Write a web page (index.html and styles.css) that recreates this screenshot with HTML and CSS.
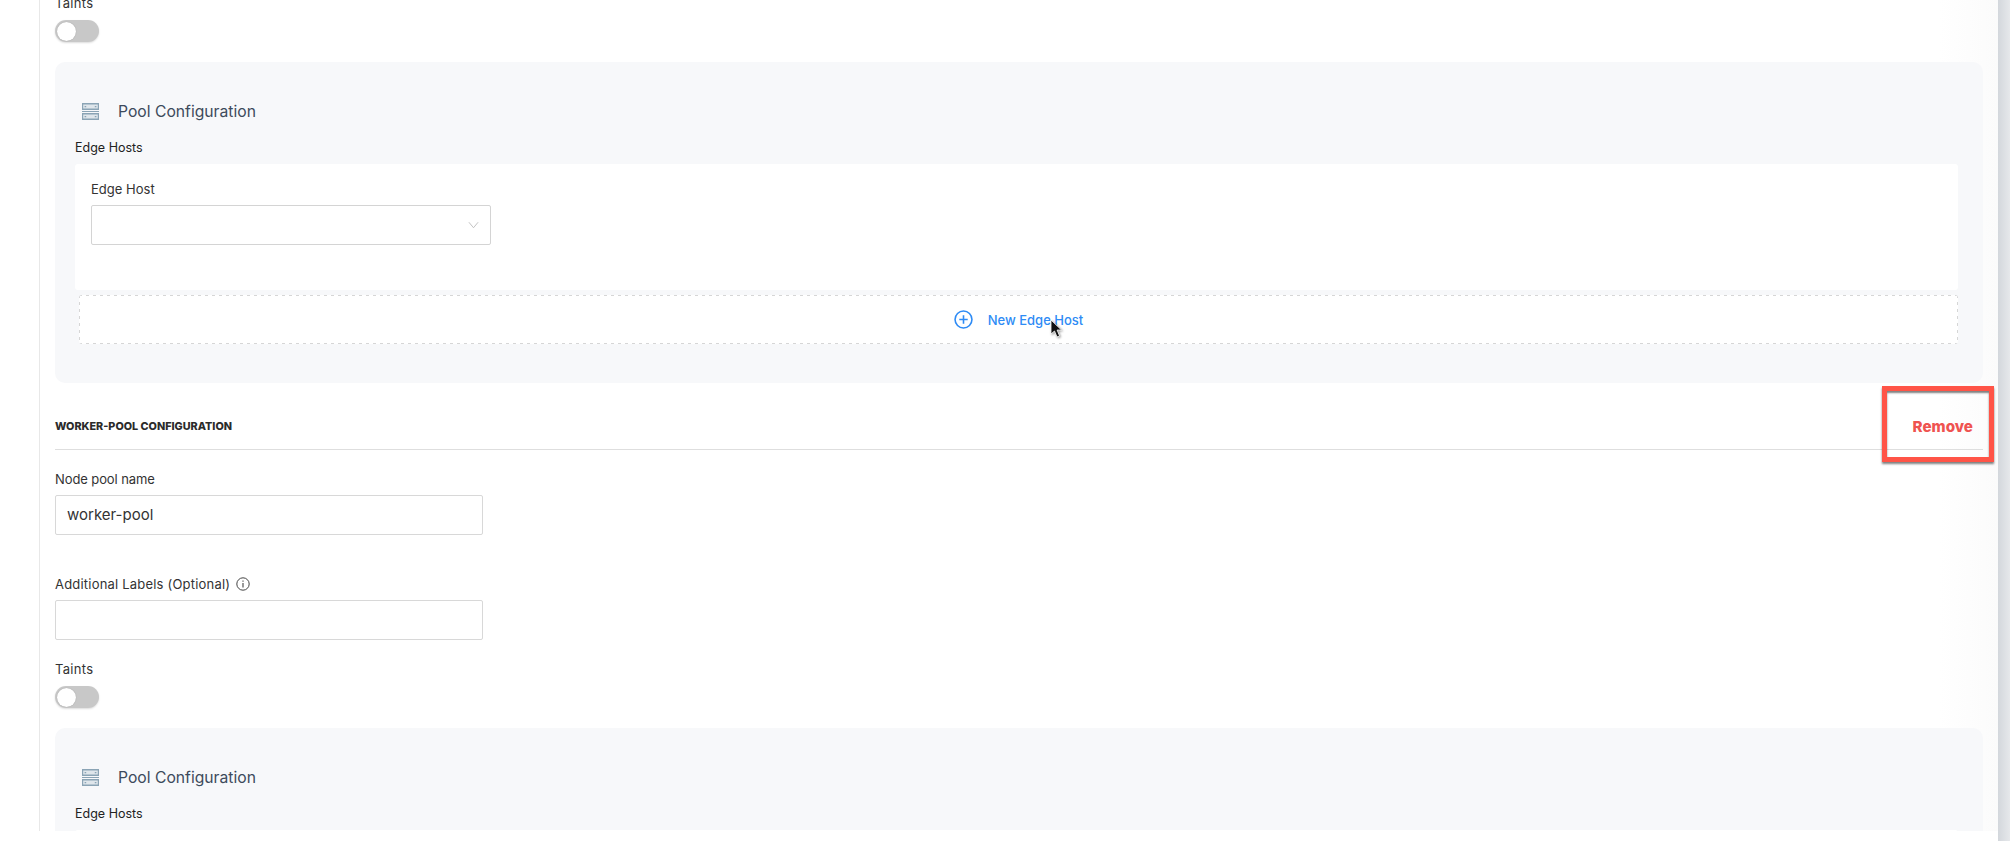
FILE: index.html
```html
<!DOCTYPE html>
<html lang="en">
<head>
<meta charset="utf-8">
<title>Worker Pool Configuration</title>
<link rel="stylesheet" href="styles.css">
</head>
<body>
<svg class="defs" width="0" height="0" aria-hidden="true">
  <symbol id="server" viewBox="0 0 17 17">
    <path fill="#dfe6eb" d="M1 1h15v5H1zM1 11h15v5H1z"/>
    <path fill="#8ba4b5" fill-rule="evenodd" d="M0 0h17v7H0zM1.2 1.4v4.2h14.6V1.4zM0 10h17v7H0zM1.2 11.4v4.2h14.6v-4.2z"/>
    <path fill="#8ba4b5" d="M0 8h17v1H0zM2.6 3h1.6v1.2H2.6zM12.8 3h1.6v1.2h-1.6zM2.6 13h1.6v1.2H2.6zM12.8 13h1.6v1.2h-1.6z"/>
  </symbol>
</svg>
<div class="app">
  <aside class="rail"></aside>
  <main class="main">
    <div class="flow">
      <div class="field-label taints-label">Taints</div>
      <div class="toggle"><span class="knob"></span></div>
      <section class="panel">
        <div class="panel-head">
          <svg class="server-icon"><use href="#server"/></svg>
          <span class="panel-title">Pool Configuration</span>
        </div>
        <div class="hosts-label">Edge Hosts</div>
        <div class="host-card">
          <div class="field-label">Edge Host</div>
          <div class="select">
            <svg class="chevron" viewBox="0 0 12 8"><path d="M1 1l5 6 5-6" fill="none" stroke="currentColor" stroke-width="1"/></svg>
          </div>
        </div>
        <div class="new-host">
          <svg class="plus-icon" viewBox="0 0 18 18"><circle cx="9" cy="9" r="8" fill="none" stroke="currentColor" stroke-width="1.5"/><path d="M9 5v8M5 9h8" stroke="currentColor" stroke-width="1.5"/></svg>
          <span>New Edge Host</span>
        </div>
      </section>

      <div class="section-head">
        <h2 class="section-title">WORKER-POOL CONFIGURATION</h2>
        <span class="remove">Remove</span>
      </div>

      <div class="field-label">Node pool name</div>
      <div class="input">worker-pool</div>
      <div class="field-label labels-label">Additional Labels (Optional)
        <svg class="info-icon" viewBox="0 0 14 14"><circle cx="7" cy="7" r="6.2" fill="none" stroke="currentColor" stroke-width="1"/><path d="M7 6v4.5M7 3.5v1.3" stroke="currentColor" stroke-width="1.1"/></svg>
      </div>
      <div class="input"></div>
      <div class="field-label taints-label second">Taints</div>
      <div class="toggle"><span class="knob"></span></div>
      <section class="panel">
        <div class="panel-head">
          <svg class="server-icon"><use href="#server"/></svg>
          <span class="panel-title">Pool Configuration</span>
        </div>
        <div class="hosts-label">Edge Hosts</div>
        <div class="host-card"></div>
      </section>
    </div>
  </main>
  <div class="scrollbar"></div>
</div>
<div class="bottom-strip"></div>
<div class="annotation"></div>
<svg class="cursor" viewBox="0 0 12 20"><path d="M1 1v14l3.5-3 2.5 6 2.6-1-2.5-6h4.4z" fill="#111" stroke="#fff" stroke-width=".8"/></svg>
</body>
</html>
```
FILE: styles.css
```css
* { box-sizing: border-box; }
html, body { margin: 0; height: 100%; overflow: hidden; background: #fff; }
body { font-family: Inter, "Noto Sans", "Liberation Sans", sans-serif; color: #333; position: relative; }
.defs { position: absolute; }
.app { display: flex; height: 841px; overflow: hidden; }
.rail { width: 40px; flex: none; border-right: 1px solid #e8e8e8; }
.main { width: 1958px; flex: none; padding: 0 15px; overflow: hidden; background: linear-gradient(90deg, #fff 97%, #fbfbfb); }
.flow { margin-top: -6px; }
.scrollbar { flex: 1; background: linear-gradient(90deg, #d3d7dc, #e6e8eb); }

.field-label { font-size: 13px; letter-spacing: .02px; line-height: 18px; height: 18px; color: #333; display: flex; align-items: center; gap: 6px; white-space: nowrap; }
.taints-label { margin-bottom: 8px; letter-spacing: .3px; }
.taints-label.second { margin-top: 20px; }
.labels-label { margin-top: 40px; margin-bottom: 7px; letter-spacing: .2px; }

.toggle { width: 44px; height: 22px; border-radius: 11px; background: #c8c8c8; position: relative; box-shadow: 0 1px 2px rgba(0,0,0,.14); }
.knob { position: absolute; left: 1.5px; top: 1.5px; width: 19px; height: 19px; border-radius: 50%; background: #fff; box-shadow: 0 0 1px rgba(0,0,0,.3); }

.panel { margin-top: 20px; padding: 38px 20px 0; height: 321px; background: #f7f8fa; border-radius: 10px; }
.panel-head { display: flex; align-items: center; height: 22px; padding-left: 7px; gap: 19px; }
.server-icon { width: 17px; height: 17px; }
.panel-title { font-size: 15.7px; color: #3d4a5c; }
.hosts-label { margin-top: 17px; font-size: 12.5px; line-height: 18px; color: #222; }
.host-card { margin-top: 7px; height: 126px; width: 1883px; background: #fff; border-radius: 3px; padding: 16px 16px; }
.select { position: relative; margin-top: 7px; width: 400px; height: 40px; background: #fff; border: 1px solid #d4d4d4; border-radius: 2px; }
.chevron { position: absolute; right: 11px; top: 15px; width: 11px; height: 8px; color: #bdbdbd; }
.new-host {
  margin: 5px 0 0 4px; width: 1879px; height: 49px; border-radius: 3px;
  display: flex; align-items: center; justify-content: center; gap: 15px;
  font-size: 13px; font-weight: 500; color: #2e8bf5;
  background-color: #fff;
  background-image:
    repeating-linear-gradient(90deg, #d6d6d6 0 3px, transparent 3px 7px),
    repeating-linear-gradient(90deg, #d6d6d6 0 3px, transparent 3px 7px),
    repeating-linear-gradient(180deg, #d6d6d6 0 3px, transparent 3px 7px),
    repeating-linear-gradient(180deg, #d6d6d6 0 3px, transparent 3px 7px);
  background-size: 100% 1px, 100% 1px, 1px 100%, 1px 100%;
  background-position: 0 0, 0 100%, 0 0, 100% 0;
  background-repeat: no-repeat;
}
.plus-icon { width: 19px; height: 19px; margin-bottom: 1px; }

.section-head { display: flex; align-items: center; justify-content: space-between; height: 67px; padding-right: 10px; padding-top: 21px; border-bottom: 1px solid #dedede; }
.section-title { margin: 0; font-size: 10.8px; font-weight: 800; color: #2b2b2b; }
.remove { font-size: 15.2px; font-weight: 800; color: #ef5350; }

.section-head + .field-label { margin-top: 20px; margin-bottom: 7px; letter-spacing: -.1px; }
.input { width: 428px; height: 40px; border: 1px solid #d8d8d8; border-radius: 2px; padding: 0 11px; font-size: 15px; line-height: 38px; color: #333; background: #fff; }
.info-icon { width: 14px; height: 14px; color: #444; }

.bottom-strip { position: absolute; left: 0; right: 12px; top: 831px; height: 10px; background: #fff; }
.annotation { position: absolute; left: 1882px; top: 386px; width: 112px; height: 76px; border: 5px solid #ff5447; box-shadow: 0 2px 2px rgba(0,0,0,.5), inset 0 2px 2px rgba(0,0,0,.5); }
.cursor { position: absolute; left: 1050px; top: 319px; width: 12px; height: 20px; filter: drop-shadow(1px 1px 1px rgba(0,0,0,.4)); }
```
